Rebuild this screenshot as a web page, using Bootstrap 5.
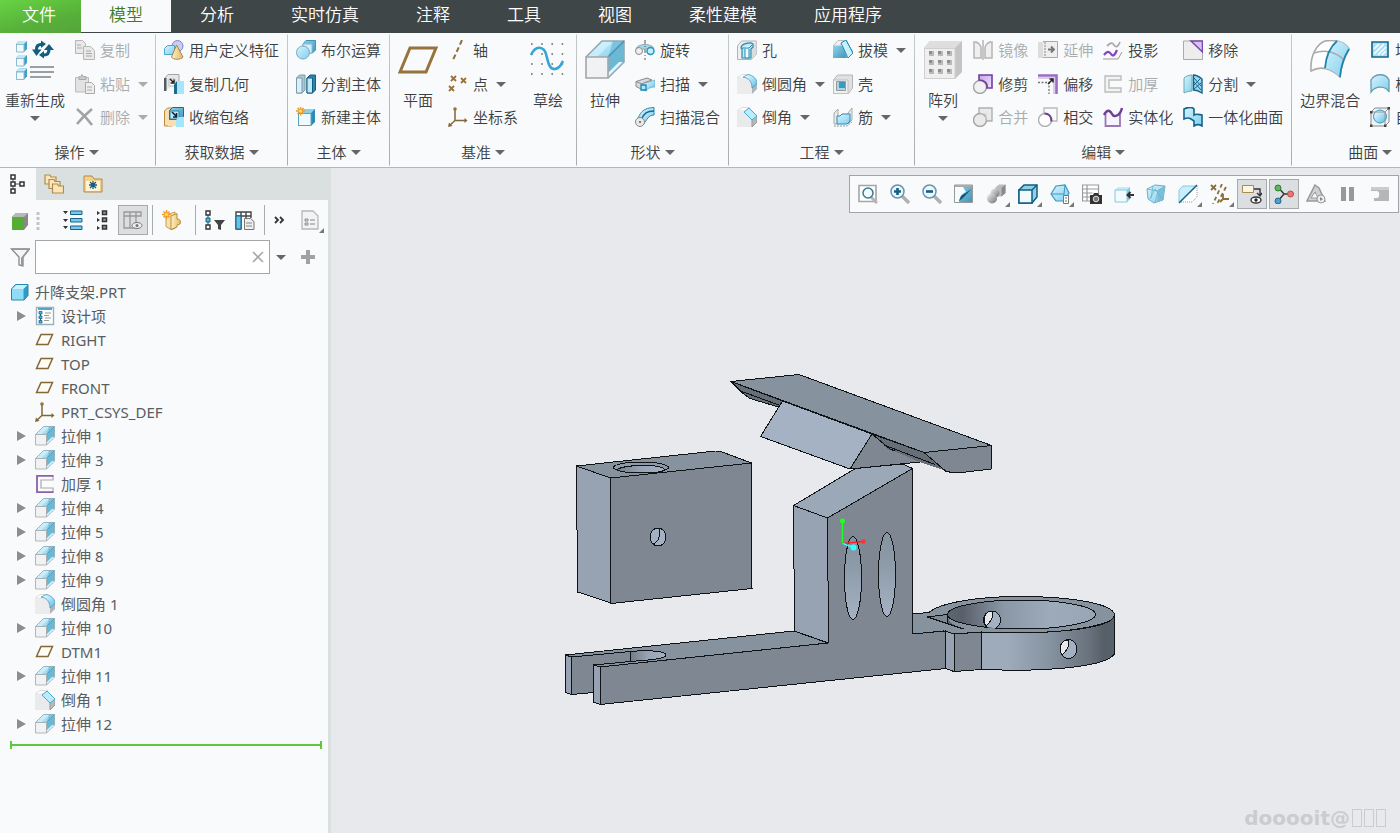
<!DOCTYPE html>
<html lang="zh-CN">
<head>
<meta charset="utf-8">
<meta name="viewport" content="width=device-width, initial-scale=1">
<title>升降支架.PRT</title>
<link rel="stylesheet" href="https://cdn.jsdelivr.net/npm/bootstrap@5.3.0/dist/css/bootstrap.min.css">
<style>
:root{--ink:#3b3f42;--muted:#a9abad;--pane:#f8fafc;--strip:#dae0e0;--rule:#b0b8b8}
body{font-family:"Noto Sans","Noto Sans CJK SC",sans-serif;font-size:15px;line-height:20px;font-weight:350;color:var(--ink);background:#e8e9ed}
svg{display:block;flex:none}
.ic{width:20px;height:20px}
.ic-lg{width:40px;height:40px}
.gap-10{gap:10px}
.gap-8{gap:8px}
.btn{--bs-btn-padding-x:0;--bs-btn-padding-y:0;--bs-btn-border-width:0;--bs-btn-border-radius:0;--bs-btn-font-size:15px;--bs-btn-line-height:20px;--bs-btn-font-weight:350;--bs-btn-color:var(--ink);--bs-btn-disabled-opacity:1;--bs-btn-disabled-color:var(--muted);white-space:nowrap}
.caret{width:0;height:0;border:5px solid transparent;border-top-color:#666;border-bottom:0;flex:none}
:disabled>.caret{border-top-color:var(--muted)}
.menu-tabs{background:#3e4647;height:33px;gap:1px}
.menu-tabs .nav-link{color:#fff;font-size:17px;line-height:24px;padding:3px 28px 5px;border-radius:0;height:33px}
.menu-tabs .file-tab{background:linear-gradient(165deg,#68d343,#57b13a 60%,#55a33a);padding-left:22px;padding-right:25px;margin-right:-1px}
.menu-tabs .active{background:var(--pane);color:#3f7c24;height:32px}
.ribbon{background:var(--pane);border-bottom:1px solid var(--rule);height:135px}
.tool-group{border-right:1px solid;border-image:linear-gradient(transparent 2px,#c4c9c9 3px,#a8adad 131px,transparent 132px) 1;padding:0 8px;flex:none}
.tool-group:first-child{padding:0 7px 0 5px}
.tool-rows{display:grid;grid-template-rows:34px 34px 32px;align-content:start;justify-items:start;height:102px}
.tool-rows .btn{display:flex;align-items:center;gap:5px}
.tool-rows .caret{margin-left:3px}
.group-name{height:32px;padding-top:2px}
.big-tool{display:flex;flex-direction:column;align-items:center;padding-top:7px;height:102px}
.big-tool span{margin-top:10px}
.big-tool .caret{margin-top:6px}
.side-pane{width:331px;border-right:3px solid var(--strip);background:var(--pane);flex:none}
.pane-tabs{background:var(--strip);height:32px}
.pane-tabs .nav-link{border-radius:0;padding:0;width:36px;height:32px;display:flex;align-items:center;justify-content:center}
.pane-tabs .nav-item+.nav-item{margin-right:3px}
.pane-tabs .active{background:var(--pane)}
.pane-tools{height:40px;padding-left:10px}
.pressed{background:#dcdfe1;outline:1px solid #a6aaad;outline-offset:-1px}
.sq{width:30px;height:30px;display:flex;align-items:center;justify-content:center}
.vr-line{width:1px;height:30px;background:#a9adad}
.filter-row{height:34px;padding-left:10px}
.filter-row input{height:34px;border:1px solid #a3a7a9;border-radius:0;padding:0 28px 0 6px;font-size:15px}
.filter-box{width:235px;margin-left:5px}
.clear-btn{position:absolute;right:6px;top:11px}
.filter-opt{padding:0 6px}
.tree{color:#5a5d5f;margin:6px 0 0;font-weight:400}
.tree li>div{height:24px;padding-left:17px}
.tree .root-row{padding-left:10px}
.tree .root-row .ic{margin-right:5px}
.twisty{width:10px;height:20px;margin-right:8px;display:flex;align-items:center}
.twisty::before{content:"";border:5px solid transparent;border-left:9px solid #8b8e90;border-right:0}
span.twisty::before{display:none}
.tree .ic{margin-right:6px}
.insert-line{height:2px;background:#5ec93c;margin:8px 6px 0 10px;position:relative}
.insert-line::before,.insert-line::after{content:"";position:absolute;top:-3px;width:2px;height:8px;background:#5ec93c}
.insert-line::before{left:0}.insert-line::after{right:0}
.view-tools{position:absolute;top:7px;right:1px;background:#f8fafc;border:1px solid #a3a3a8;padding:3px;gap:2px}
.more::after{content:"";position:absolute;right:1px;bottom:2px;border-left:5px solid transparent;border-bottom:5px solid #777}
.watermark{position:absolute;right:14px;bottom:4px;font:bold 20px/22px "DejaVu Sans",sans-serif;color:#cbcccd}
.watermark i{width:10px;height:18px;border:1px solid #cbcccd;margin-left:2px}
</style>
<script src="https://cdn.jsdelivr.net/npm/bootstrap@5.3.0/dist/js/bootstrap.bundle.min.js"></script>
</head>
<body class="vh-100 d-flex flex-column overflow-hidden">
<svg class="position-absolute" width="0" height="0" aria-hidden="true">
<defs>
<linearGradient id="gb" x1="0" y1="0" x2="1" y2="1"><stop offset="0" stop-color="#d8f3fd"/><stop offset="1" stop-color="#7fd0ef"/></linearGradient>
<linearGradient id="gd" x1="0" y1="0" x2="1" y2="1"><stop offset="0" stop-color="#8fd3ec"/><stop offset="1" stop-color="#3f94b8"/></linearGradient>
<linearGradient id="gw" x1="0" y1="0" x2="1" y2="1"><stop offset="0" stop-color="#fff"/><stop offset=".5" stop-color="#a9e2f8"/><stop offset="1" stop-color="#58b9df"/></linearGradient>
<linearGradient id="gt" x1="0" y1="0" x2="1" y2="0"><stop offset="0" stop-color="#fff1c9"/><stop offset="1" stop-color="#e5b964"/></linearGradient>
<linearGradient id="gg" x1="0" y1="0" x2="1" y2="1"><stop offset="0" stop-color="#f4f4f4"/><stop offset="1" stop-color="#6f6f6f"/></linearGradient>
<linearGradient id="gp" x1="0" y1="0" x2="1" y2="1"><stop offset="0" stop-color="#c9a3ec"/><stop offset="1" stop-color="#efe3fb"/></linearGradient>
</defs>
<symbol id="cubes" viewBox="0 0 40 40"><g id="c1"><path d="M1 4l3-3h8v8l-3 3H1z" fill="#3f9fc6"/><path d="M1 4l3-3h8L9 4z" fill="#bdeafa"/><path d="M1.500 4.500H9V12H1.500z" fill="#f3f8fa" stroke="#8cbccd"/></g><use href="#c1" y="14"/><use href="#c1" y="27.500"/><path d="M21.500 11C21 6 23 4.500 26 4.500" fill="none" stroke="#135e80" stroke-width="3.200"/><path d="M17 9.500h9.500L21.500 16z" fill="#135e80"/><path d="M29 15c3 0 5-1 5-6" fill="none" stroke="#135e80" stroke-width="3.200"/><path d="M29 10h10l-5-6z" fill="#135e80"/><path d="M26 .500l5 3.500-5 4zM29 18.500l-5-3.500 5-4z" fill="#135e80"/><path d="M15 27h24M15 32h24M15 37h21" stroke="#9b9fa1" stroke-width="2.200"/></symbol>
<symbol id="copy" viewBox="0 0 20 20"><g fill="#e9e9e9" stroke="#b5b5b5"><path d="M.5.500h7l3 3v10H.500z"/><path d="M8.500 6.500h7l4 4v9h-11z"/></g><path d="M2 5h4M2 8h5M11 11h5M11 13.500h6M11 16h6" stroke="#a8a8a8"/></symbol>
<symbol id="paste" viewBox="0 0 20 20"><path d="M.5 3.500h13V18H.500z" fill="#e2e2e2" stroke="#bbb"/><path d="M4 2.500h2l1-2 1 2h3v3H4z" fill="#ccc" stroke="#aaa"/><path d="M10.500 8.500h6l3 3v8h-9z" fill="#eee" stroke="#aaa"/><path d="M12 13h5M12 16h5" stroke="#aaa"/></symbol>
<symbol id="del" viewBox="0 0 20 20"><path d="M2 2c5 4 10 9 15 16M17 2C11 7 6 12 2 17" fill="none" stroke="#a3a3a3" stroke-width="2.600"/></symbol>
<symbol id="udf" viewBox="0 0 20 20"><circle cx="13.500" cy="6" r="5.500" fill="#c7cef2" stroke="#7d88c2"/><path d="M.5 8.500l3-3h7v9h-10z" fill="url(#gb)" stroke="#4ba9cd"/><path d="M12.500 5L19 17c-2 3-10 3-11.500 0z" fill="url(#gt)" stroke="#a58449"/></symbol>
<symbol id="geom" viewBox="0 0 20 20"><path d="M1 17V4l3-3.500h11V7" fill="#e6e8e9" stroke="#a3a6a8"/><path d="M0 4h2.500v13H0z" fill="#555b5e"/><path d="M5 5h6v7H5z" fill="#fff" stroke="#bbb"/><path d="M6 5l4 4M10 5.500V9H6.500" stroke="#222" fill="none" stroke-width="1.500"/><path d="M10 11l3-4v13h-3z" fill="#1e6a8a"/><path d="M13 7h7v13h-7z" fill="#a5e6fd"/></symbol>
<symbol id="shrink" viewBox="0 0 20 20"><path d="M.5 4l3-3h5v18h-8z" fill="#f8deb0" stroke="#b98b3d"/><path d="M5.500 3.500l3-3h11v9l-3 3h-11z" fill="url(#gd)" stroke="#1e6a8a"/><path d="M6 4h9v8H6z" fill="#bdeafa" stroke="#2b7ea0"/><path d="M8 5l4 4M12.500 6v4H9" fill="none" stroke="#123" stroke-width="1.600"/><path d="M4 13h8v6H4z" fill="#f8deb0"/><path d="M12 13l3-3h5v10h-8z" fill="#a5e6fd"/></symbol>
<symbol id="bool" viewBox="0 0 20 20"><path d="M7 4l3-3.500h9.500V10l-3 3H7z" fill="url(#gd)" stroke="#3f94b8"/><path d="M7 4h9v9H7z" fill="#d3eef8" stroke="#84bcd1"/><circle cx="7" cy="12.500" r="6.500" fill="url(#gb)" stroke="#79a9bb"/></symbol>
<symbol id="split" viewBox="0 0 20 20"><path d="M.5 4l3-3h5.500v15l-3 3H.500z" fill="#a9c7d3" stroke="#7f9aa5"/><path d="M.5 4H6v15H.500z" fill="#d6f1fb" stroke="#7f9aa5"/><path d="M11 4l3-3h5.500v15l-3 3H11z" fill="#2a86ac" stroke="#165d7e"/><path d="M11 4h5.500v15H11z" fill="#bdeafa" stroke="#165d7e"/></symbol>
<symbol id="newbody" viewBox="0 0 20 20"><path d="M2 6l4-4h13v13l-4 4H2z" fill="#2d8bb3"/><path d="M2 6l4-4h13l-4 4z" fill="#8bd0e9"/><path d="M2.500 6.500H15v12H2.500z" fill="#effafe" stroke="#5aa4c0"/><path d="M4.500-.5v9M0 4h9M1.500 1l6 6M7.500 1l-6 6" stroke="#f09a2b" stroke-width="1.500"/><circle cx="4.500" cy="4" r="1.500" fill="#ffe45c"/></symbol>
<symbol id="plane" viewBox="0 0 40 40"><path d="M12 8h26l-10 24H2z" fill="none" stroke="#97723a" stroke-width="3"/></symbol>
<symbol id="plane-s" viewBox="0 0 20 20"><path d="M6 4.500h11.500L13 14.500H1.500z" fill="#fffdf6" stroke="#856636" stroke-width="1.500"/></symbol>
<symbol id="axis" viewBox="0 0 20 20"><path d="M14 0L5 20" stroke="#8c6d37" stroke-width="2" stroke-dasharray="5 3"/></symbol>
<symbol id="pts" viewBox="0 0 20 20"><path id="px" d="M3 2l5 5M8 2L3 7" stroke="#97723a" stroke-width="1.800"/><use href="#px" x="10" y="2"/><use href="#px" x="-2" y="10"/></symbol>
<symbol id="csys" viewBox="0 0 20 20"><path d="M7 2v11.500h11M7 13.500L1.500 18.500" fill="none" stroke="#856636" stroke-width="1.500"/><circle cx="7" cy="2" r="1.800" fill="#97723a"/><path d="M16.500 11l3 2.500-3 2.500zM0 20l1-4.500 3.500 3.500z" fill="#856636"/></symbol>
<symbol id="sketch" viewBox="0 0 40 40"><g stroke="#666" stroke-width="1.600" stroke-dasharray="1.600 8.600"><path d="M3 4h34M3 14h34M3 24h34M3 34h34"/></g><path d="M3 15C8 4 16 7 18 14s3 16 9 15 6-5 8-8" fill="none" stroke="#35a6d8" stroke-width="2.600"/></symbol>
<symbol id="ext" viewBox="0 0 40 40"><path d="M1 17L17 1h22v21L23 38z" fill="#6bb8d5"/><path d="M1 17L17 1h22L23 17z" fill="url(#gb)"/><path d="M17 1h11L12 17H1z" fill="#d4f2fc" opacity=".7"/><path d="M28 1h11L23 17z" fill="#7cc4de"/><path d="M23 38V33l11-11h5z" fill="#dff7fe"/><path d="M1 17L17 1h22v21L23 38" fill="none" stroke="#8fa9b3" stroke-width="1.600"/><path d="M39 1L23 17" stroke="#4592b3" stroke-width="1.500"/><path d="M1 17h22v21H1z" fill="#f1f2f4" stroke="#a5a5a5" stroke-width="1.600"/></symbol>
<symbol id="rev" viewBox="0 0 20 20"><path d="M1 9c1-6 17-6 18 0l-6 1c-1-2-4-2-6 0z" fill="#9fd9ee" stroke="#9aa"/><circle cx="4" cy="11" r="3.500" fill="#eee" stroke="#888"/><circle cx="15.500" cy="11" r="3.500" fill="#c3effd" stroke="#2794c0" stroke-width="1.500"/><path d="M10 0v20" stroke="#555" stroke-dasharray="4 2 1 2"/></symbol>
<symbol id="sweep" viewBox="0 0 20 20"><path d="M7 9c4 0 8-1 13-3v7c-4 0-7 1-9 4l-4-1z" fill="url(#gw)" stroke="#6cb3cc" stroke-width=".8"/><path d="M1 7.500L12 4l5 2-7 2.500-3 1.500v5.500l-6-3z" fill="#d9dadb" stroke="#888"/><path d="M1 7.500l6 2.500" stroke="#888"/><path d="M6 11h5v5H6z" fill="#aee6fa" stroke="#2384ac" stroke-width="1.300"/></symbol>
<symbol id="blend" viewBox="0 0 20 20"><path d="M1 14C5 9 5 1 19 .500V8c-6 0-7 5-11 10z" fill="url(#gb)" stroke="#2a87ad"/><path d="M6 13c3-7 6-9 13-9" fill="none" stroke="#1e6a8a" stroke-width="1.500"/><circle cx="5" cy="15" r="4.500" fill="#e9e9e9" stroke="#888"/><circle cx="5" cy="15" r="1" fill="#555"/></symbol>
<symbol id="hole" viewBox="0 0 20 20"><path d="M.5 6l4-5h15v13l-5 5.500H.500z" fill="#efefef" stroke="#b3b3b3"/><path d="M15 6l4.500-5v13L15 19z" fill="#dcdcdc"/><path d="M4 8c0-5 10-6 12-4v3l-2 2v9H5V9z" fill="#bdeafa" stroke="#2888b1" stroke-width="1.200"/><path d="M4 8h8l3-3M8 9v9h4V9" stroke="#2888b1" fill="#f4fcff"/></symbol>
<symbol id="round" viewBox="0 0 20 20"><path d="M0 4L5 .500h8L8 4z" fill="#fff" stroke="#ddd"/><path d="M0 4h6c6 0 9 4 9 9v7H0z" fill="#ececec"/><path d="M15 12l5-4v7l-5 5z" fill="#aeb6ba"/><path d="M6 3l5-2.500c5 1 9 4 9 9L15 14C15 8 12 4 6 3z" fill="url(#gw)" stroke="#3a9dc6" stroke-width=".8"/></symbol>
<symbol id="chamfer" viewBox="0 0 20 20"><path d="M0 4L5 .500h8L8 4z" fill="#fff" stroke="#ddd"/><path d="M0 4h7l8 8v8H0z" fill="#e9eaeb"/><path d="M15 12l5-4v7l-5 5z" fill="#b6b9bb" stroke="#999"/><path d="M7 5l5-4 8 8-5 4z" fill="#b9edfd" stroke="#4aa9cc"/></symbol>
<symbol id="draft" viewBox="0 0 20 20"><path d="M0 6l5-5.500h6L7 6z" fill="#f1f1f1" stroke="#bbb"/><path d="M0 6h10l4 12H0z" fill="url(#gd)"/><path d="M8 3l5-3 7 13-5 5z" fill="#c8f0fd" stroke="#2888b1"/><path d="M13 0l7 13-5 5" fill="none" stroke="#2f93bb"/></symbol>
<symbol id="shell" viewBox="0 0 20 20"><path d="M.5 6l4-5h15v13l-4 5.500H.500z" fill="#e0e0e0" stroke="#b5b5b5"/><path d="M.5 6h14.500v13.500H.500z" fill="#f0f0f0" stroke="#c0c0c0"/><path d="M3.500 7.500h9v9h-9z" fill="#9adcf2" stroke="#999"/><path d="M6 8h6v6H6z" fill="#3f97bb"/></symbol>
<symbol id="rib" viewBox="0 0 20 20"><path d="M1 6l4-4v15H1zM15 6l4-5v12l-4 4z" fill="#e9e9e9" stroke="#aaa"/><path d="M4 9h3l2-2h8v7l-3 3H4z" fill="url(#gb)" stroke="#2888b1"/><path d="M1 19h13l5-4" fill="none" stroke="#999" stroke-dasharray="2 1"/></symbol>
<symbol id="pattern" viewBox="0 0 40 40"><path d="M1 8l6-7h32v31l-7 7H1z" fill="#c4c4c4"/><path d="M1 8l6-7h32l-7 7z" fill="#dedede"/><path d="M1.500 8.500H32v30H1.500z" fill="#efefef" stroke="#cfcfcf"/><g stroke="#b9b9b9" stroke-width="5" stroke-dasharray="5 4"><path d="M6 13.500h23M6 22.500h23M6 31.500h23"/></g><g stroke="#8d8d8d" stroke-width="3" stroke-dasharray="3 6"><path d="M6 12.500h22M6 21.500h22M6 30.500h22"/></g></symbol>
<symbol id="mirror" viewBox="0 0 20 20"><g fill="#efefef" stroke="#b5b5b5" stroke-width="1.500"><path d="M1 2h2c3 1 5 4 5 6v10H1zM19 2h-2c-3 1-5 4-5 6v10h7z"/><path d="M10 0v20"/></g></symbol>
<symbol id="extend" viewBox="0 0 20 20"><path d="M0 2h7v16H0z" fill="#ddd"/><path d="M5 1.500h14.500v16H5" fill="#eee" stroke="#aaa"/><path d="M7 2v15" stroke="#888" stroke-dasharray="2 1"/><path d="M10 9.500h6M13 6.500l3 3-3 3" stroke="#777" stroke-width="1.800" fill="none"/></symbol>
<symbol id="trim" viewBox="0 0 20 20"><circle cx="7" cy="13" r="6.500" fill="#f1f1f1" stroke="#a5a5a5" stroke-width="1.400"/><path d="M6 1h13v13h-5c1-5-3-8-8-8z" fill="url(#gp)" stroke="#6f3f9b" stroke-width="1.600"/></symbol>
<symbol id="merge" viewBox="0 0 20 20"><path d="M6 1h13v13H6z" fill="#eaeaea" stroke="#b0b0b0" stroke-width="1.400"/><circle cx="7" cy="13" r="6.500" fill="#eaeaea" stroke="#a5a5a5" stroke-width="1.400"/><path d="M7 7h6v6" fill="none" stroke="#ccc"/></symbol>
<symbol id="offset" viewBox="0 0 20 20"><path d="M0 1.500h18.500V20" fill="none" stroke="#9a6cc4" stroke-width="2.600"/><path d="M0 4h16v16" fill="none" stroke="#dccbed" stroke-width="2"/><path d="M0 8.500h11V20" fill="none" stroke="#777" stroke-width="1.300" stroke-dasharray="2 1.500"/><path d="M10 10l5-5M11.500 5H15v3.500" stroke="#222" stroke-width="1.500" fill="none"/></symbol>
<symbol id="isect" viewBox="0 0 20 20"><path d="M6 1h13v13H6z" fill="none" stroke="#bbb" stroke-width="1.400"/><circle cx="7" cy="13" r="6.500" fill="#fff" stroke="#b0b0b0" stroke-width="1.400"/><path d="M6.500 6.500c4 0 7.500 3 7 8" fill="none" stroke="#6b4390" stroke-width="2"/></symbol>
<symbol id="project" viewBox="0 0 20 20"><path d="M4 6c3-3 5-4 7-1s4 2 6-3" fill="none" stroke="#aaa" stroke-width="1.800"/><path d="M0 19h15l4-7" fill="none" stroke="#999"/><path d="M1 15c3-4 5-4 7-1s4 1 6-4" fill="none" stroke="#8742bd" stroke-width="2.200"/></symbol>
<symbol id="thick" viewBox="0 0 20 20"><path d="M18 2H2v16h16v-4H6V6h12z" fill="#f3f3f3" stroke="#bdbdbd" stroke-width="1.400"/></symbol>
<symbol id="thick-p" viewBox="0 0 20 20"><path d="M18 2v4H6v8h12v4" fill="#fbfbfb" stroke="#aaa" stroke-width="1.200"/><path d="M18.500 1.800H2v16.400h16.500" fill="none" stroke="#8a5fae" stroke-width="1.800"/></symbol>
<symbol id="solid" viewBox="0 0 20 20"><path d="M2.500 7v12h14.500V6" fill="#f8f4fc" stroke="#9a77b7" stroke-width="1.800"/><path d="M1 8c3-6 6-5 8-1s8 2 10-6" fill="none" stroke="#6e3f99" stroke-width="2.400"/></symbol>
<symbol id="remove" viewBox="0 0 20 20"><path d="M.5 1h19v18.500H.500z" fill="#ededed" stroke="#aaa"/><path d="M8 1h11.500v11z" fill="#d9bff2" stroke="#7a4aa6" stroke-width="1.500"/></symbol>
<symbol id="divide" viewBox="0 0 20 20"><path d="M1 4c2-2 5-3 8-3v16c-3 0-6 1-8 2z" fill="url(#gb)" stroke="#6aa"/><path d="M10.500 1c3 0 6 2 8.500 4v14c-3-2-6-3-8.500-3z" fill="#9bd8f0" stroke="#17648a" stroke-width="1.400"/><path d="M11 4l7 8M11 8l7 8M17 5l-6 6M18 9l-7 6" stroke="#17648a"/></symbol>
<symbol id="unify" viewBox="0 0 20 20"><path d="M1 2c4-2 8-2 10 0v6c3-2 6 0 8 0v11c-3-2-5-2-8 0v-5l-3-2c-3-2-5-1-7 0z" fill="url(#gb)" stroke="#17648a" stroke-width="1.600"/></symbol>
<symbol id="bound" viewBox="0 0 40 40"><path d="M1 31C0 15 7 4 15 1c9-2 20 1 24 8-4 7-8 15-9 28-8-8-19-12-29-6z" fill="#fff" stroke="#aaa" stroke-width="1.600"/><path d="M27 1c6 1 10 4 12 8-5 8-8 16-9 28-5-5-10-8-15-9 1-11 4-21 12-27z" fill="url(#gb)"/><path d="M4 13c11-4 22-1 30 7" fill="none" stroke="#aaa" stroke-width="1.500"/><path d="M27 1c-7 6-11 15-12 27M39 9c-5 8-8 16-9 28" fill="none" stroke="#1e83ad" stroke-width="1.800"/></symbol>
<symbol id="fill" viewBox="0 0 20 20"><path d="M2 2h16v15H2z" fill="#a9e0f5" stroke="#17648a" stroke-width="1.600"/><path d="M4 9l5-5M4 14L14 4M8 15l8-8M12 15l4-4" stroke="#fff" stroke-width="1.500"/></symbol>
<symbol id="style" viewBox="0 0 20 20"><path d="M1 6c4-7 15-7 18 0v12c-3-6-13-7-18 0z" fill="url(#gb)" stroke="#689bb0" stroke-width="1.300"/></symbol>
<symbol id="free" viewBox="0 0 20 20"><path d="M1 5l4-4h14v14l-4 4H1z" fill="#f1f3f4" stroke="#888"/><circle cx="10" cy="9.500" r="6.500" fill="url(#gw)" stroke="#3c98bd"/><path d="M1 5h14v14M15 5l4-4" fill="none" stroke="#999"/><path d="M0 4h2.500v2.500H0zM0 17.500h2.500V20H0zM14 17.500h2.500V20H14zM17.500 0H20v2.500h-2.500z" fill="#444"/></symbol>
<symbol id="treeI" viewBox="0 0 20 20"><path d="M5 2v16M5 10h9" stroke="#555"/><path d="M3 1h4v4H3zM3 8h4v4H3zM3 15h4v4H3zM12 8h4v4h-4z" fill="#fff" stroke="#333" stroke-width="1.500"/></symbol>
<symbol id="folders" viewBox="0 0 20 20"><g id="fo"><path d="M1 3V1h5l1 2h5v7H1z" fill="#fbe6b9" stroke="#b18b4d" stroke-width="1.200"/></g><use href="#fo" x="4" y="4.500"/><use href="#fo" x="7.500" y="9"/></symbol>
<symbol id="fav" viewBox="0 0 20 20"><path d="M1 18V2h8l2 3h8v13z" fill="#f4d18b" stroke="#b18b4d"/><path d="M3 7h14v10H3z" fill="#fff3d2"/><path d="M10 7v8M6 11h8M7 8l6 6M13 8l-6 6" stroke="#135e80" stroke-width="1.300"/></symbol>
<symbol id="gcube" viewBox="0 0 20 20"><path d="M2 7l4-4h12v12l-4 5H2z" fill="#888"/><path d="M2 7l4-4h12l-4 4z" fill="#b8b8b8"/><path d="M2 7.500h12V20H2z" fill="#55ad36"/></symbol>
<symbol id="bcube" viewBox="0 0 20 20"><path d="M1.500 7l4-4.500H18v11l-4 4.500H1.500z" fill="#2f9bc6" stroke="#2685ab"/><path d="M2 7l4-4h11.500l-4 4z" fill="#c8f0fd"/><path d="M2 7h11.500v10.500H2z" fill="#8fdcf8"/></symbol>
<symbol id="exp" viewBox="0 0 20 20"><path d="M0 1h5L2.500 4zM0 9h5l-2.500 3zM0 16h5l-2.500 3z" fill="#333"/><path d="M7.500 1h11.500v3.500H7.500zM7.500 8.500h11.500v3.500H7.500zM7.500 16h11.500v3.500H7.500z" fill="#79c9e8" stroke="#17648a"/></symbol>
<symbol id="col" viewBox="0 0 20 20"><path d="M4 1l3 2-3 2zM4 8l3 2-3 2zM4 16l3 2-3 2z" fill="#333"/><path d="M9.500 1h4v3.500h-4zM9.500 8h4v3.500h-4zM9.500 15.500h4V19h-4z" fill="#999" stroke="#333" stroke-width="1.500"/></symbol>
<symbol id="cols" viewBox="0 0 20 20"><path d="M1 2h17v4H1zM1 6v12h12V6M7 2v16M13 2v16" fill="#ddd" stroke="#999" stroke-width="1.300"/><ellipse cx="14" cy="15.500" rx="5" ry="3" fill="#eee" stroke="#777"/><circle cx="14" cy="15.500" r="1.500" fill="#777"/></symbol>
<symbol id="puzzle" viewBox="0 0 20 20"><path d="M4 5l9-3v16.500l-4 1-5-3z" fill="#fbe0a9" stroke="#c79c54"/><path d="M9 6l6-2.500V9c3 0 4 2 3 5l-3 1v2l-6 2.500z" fill="url(#gt)" stroke="#b98b3d"/><path d="M4.500 0v9M0 4.500h9M1.500 1.500l6 6M7.500 1.500l-6 6" stroke="#f09a2b" stroke-width="1.500"/><circle cx="4.500" cy="4.500" r="1.500" fill="#ffe45c"/></symbol>
<symbol id="tfil" viewBox="0 0 20 20"><path d="M3 2v17" stroke="#444"/><path d="M1 1h4v4H1zM1 15h4v4H1z" fill="#fff" stroke="#333" stroke-width="1.400"/><path d="M1 8h4v4H1z" fill="#4db8e0" stroke="#17648a"/><path d="M9 10h11l-4 5v5l-3-1v-4z" fill="#444"/></symbol>
<symbol id="tcol" viewBox="0 0 20 20"><path d="M1 2h15v4H1zM1 6v13h5V6M6 2v17M11 2v8M16 2v6" fill="#fff" stroke="#444" stroke-width="1.400"/><path d="M1 6h5v13H1z" fill="#67c2e4" stroke="#17648a"/><path d="M9.500 8.500h6l3.500 3v8H9.500z" fill="#eee" stroke="#777"/><path d="M11 13h6M11 16h6" stroke="#888"/></symbol>
<symbol id="docl" viewBox="0 0 20 20"><path d="M2 1h11l5 5v13H2z" fill="#f2f3f4" stroke="#b5b9bb" stroke-width="1.300"/><path d="M5 9h3v2H5zM5 13h3v2H5zM10 10h5M10 14h5" fill="none" stroke="#888"/></symbol>
<symbol id="funnel" viewBox="0 0 20 20"><path d="M1.500 2h18L13 10v9l-4-1v-8z" fill="#f5f5f5" stroke="#888" stroke-width="1.300"/><path d="M1 1.500h19v1.500H1zM11 11l7-9h2l-7 9v8l-2-1z" fill="#999"/></symbol>
<symbol id="design" viewBox="0 0 20 20"><path d="M1.500 1.500h17v17h-17z" fill="#fff" stroke="#9db0b9" stroke-width="1.400"/><path d="M3 3h14" stroke="#2b93c0" stroke-width="1.600"/><path d="M5.500 6v11" stroke="#17648a"/><path d="M4 5.500h3V8H4zM4 10h3v2.500H4zM4 14.500h3V17H4z" fill="#4db8e0" stroke="#17648a" stroke-width=".8"/><path d="M10 7h6M9 9.500h5M10 12h6M9 14.500h5" stroke="#999"/></symbol>
<symbol id="zfit" viewBox="0 0 20 20"><path d="M1 1.500h17v16H1z" fill="#fff" stroke="#a5a5a5" stroke-width="1.600"/><path d="M13 13l6 6" stroke="#b5b5b5" stroke-width="3"/><circle cx="10" cy="9" r="5" fill="#effaff" stroke="#3d7792" stroke-width="1.500"/></symbol>
<symbol id="zin" viewBox="0 0 20 20"><path d="M12 12l7 7" stroke="#b0b0b0" stroke-width="3.500"/><circle cx="7.500" cy="7.500" r="6.500" fill="#eaf8fe" stroke="#6a96aa" stroke-width="1.500"/><path d="M7.500 4v7M4 7.500h7" stroke="#145f83" stroke-width="2.600"/></symbol>
<symbol id="zout" viewBox="0 0 20 20"><path d="M12 12l7 7" stroke="#b0b0b0" stroke-width="3.500"/><circle cx="7.500" cy="7.500" r="6.500" fill="#eaf8fe" stroke="#6a96aa" stroke-width="1.500"/><path d="M4 7.500h7" stroke="#145f83" stroke-width="2.600"/></symbol>
<symbol id="repaint" viewBox="0 0 20 20"><path d="M.5 1h18v17.500H.500z" fill="url(#gd)" stroke="#999"/><path d="M1 1h17v2H1z" fill="#aaa"/><path d="M1 3h8l3 5c-5 2-6 5-7 10H1z" fill="#f4fbfe"/><path d="M17.500 5L9 14l-4 3 2-5z" fill="#17546f"/></symbol>
<symbol id="render" viewBox="0 0 20 20"><path d="M9 4l4-3.500h6.500V9l-4 3.500H9z" fill="#bbb"/><path d="M15.500 4l4-3.500V9l-4 3.500z" fill="#8a8a8a"/><circle cx="9" cy="9" r="4.500" fill="url(#gg)"/><circle cx="6" cy="14.500" r="5" fill="url(#gg)"/></symbol>
<symbol id="wcube" viewBox="0 0 20 20"><path d="M1 6l5-5h13v12l-5 6H1z" fill="#8cd0ea" stroke="#135e80" stroke-width="1.500"/><path d="M1 6h13v13H1zM14 6l5-5" fill="#f0fbff" stroke="#135e80" stroke-width="1.500"/></symbol>
<symbol id="orient" viewBox="0 0 20 20"><path d="M1 10l5-8 9-1 4 8-4 8H6z" fill="url(#gb)" stroke="#3c98bd" stroke-width="1.200"/><path d="M1 10h13l1-9M14 10v9" fill="none" stroke="#3c98bd"/><path d="M13.500 11.500h5v8h-5z" fill="#fff" stroke="#777"/><path d="M15 14h2M15 17h2" stroke="#777"/></symbol>
<symbol id="cam" viewBox="0 0 20 20"><path d="M.5 1h16v16H.500zM.5 5h16M.5 9h10M.5 13h8M5 1v16" fill="#fff" stroke="#999" stroke-width="1.200"/><path d="M8 11h3l1-2h4l1 2h3v9H8z" fill="#333"/><circle cx="14" cy="15" r="2.800" fill="#777" stroke="#ddd"/></symbol>
<symbol id="sec" viewBox="0 0 20 20"><path d="M1 6l4-3h11v12l-3 3H1z" fill="#7dcdea"/><path d="M1 6l4-3h11l-3 3z" fill="#c3ecfa"/><path d="M1 6h12v12H1z" fill="#f1fbff" stroke="#8fc7da"/><path d="M20 11h-6M16.500 8l-3 3 3 3" fill="none" stroke="#333" stroke-width="2"/></symbol>
<symbol id="persp" viewBox="0 0 20 20"><path d="M1 5l8-4 10 1-2 14-9 3-6-4z" fill="url(#gb)" stroke="#6cb0c9"/><path d="M12 6l7-4-2 14-6 2z" fill="#7dbfd8"/><path d="M1 5l11 2 7-5M12 7l-3 12M4 15L9 5l8 11M7 2l-2 12" fill="none" stroke="#6cb0c9" stroke-width=".8"/></symbol>
<symbol id="halfc" viewBox="0 0 20 20"><path d="M1 18V6l4-4h14z" fill="#c9effc" stroke="#8fc7da"/><path d="M19 2v11l-5 5H2z" fill="#fff" stroke="#999" stroke-dasharray="1 1"/><path d="M19 1L1 19" stroke="#17648a" stroke-width="1.500"/></symbol>
<symbol id="datum" viewBox="0 0 20 20"><g fill="none" stroke="#8c6d37" stroke-width="1.800"><path d="M1 1l5 5M6 1L1 6"/><path d="M12 0L3 20M16 3L7 20" stroke-dasharray="4 3"/><path d="M13 10v5h6M13 15l-3 3"/></g></symbol>
<symbol id="annot" viewBox="0 0 20 20"><path d="M.5 1.500h11v7H.500z" fill="#fff5dc" stroke="#a78a55"/><path d="M12 5h6v6M15 9l3 3 2-3" fill="none" stroke="#333" stroke-width="1.400"/><ellipse cx="14" cy="16" rx="5" ry="3" fill="#fff" stroke="#333" stroke-width="1.400"/><circle cx="14" cy="16" r="1.700" fill="#222"/></symbol>
<symbol id="spin" viewBox="0 0 20 20"><path d="M4 3l6 7h7M10 10l-6 7" fill="none" stroke="#333" stroke-width="1.400"/><circle cx="4" cy="4" r="3" fill="#5cb85c" stroke="#337a38"/><circle cx="16.500" cy="10" r="3" fill="#ed7777" stroke="#b94747"/><circle cx="4" cy="17" r="3" fill="#4b9fd0" stroke="#236a93"/></symbol>
<symbol id="sim" viewBox="0 0 20 20"><path d="M9 1l4 3 6 13H1z" fill="#d0d0d0" stroke="#999" stroke-width="1.500"/><path d="M9 8l3 6H5z" fill="#f8fafc" stroke="#999"/><circle cx="15" cy="15" r="4" fill="#eee" stroke="#999"/><path d="M14 13l3 2-3 2z" fill="#888"/></symbol>
<symbol id="pause" viewBox="0 0 20 20"><path d="M3 3h5v14H3zM11 3h5v14h-5z" fill="#999"/></symbol>
<symbol id="resume" viewBox="0 0 20 20"><path d="M1 3h18v14H4v-3h3c3 0 3-7 0-7H1z" fill="#b6b6b6"/><path d="M1 3h18v3H1z" fill="#ccc"/></symbol>
</svg>

<header>
<ul class="nav menu-tabs flex-nowrap">
<li><a class="nav-link file-tab" href="#">文件</a></li><li><a class="nav-link active" href="#">模型</a></li><li><a class="nav-link" href="#">分析</a></li><li><a class="nav-link" href="#">实时仿真</a></li><li><a class="nav-link" href="#">注释</a></li><li><a class="nav-link" href="#">工具</a></li><li><a class="nav-link" href="#">视图</a></li><li><a class="nav-link" href="#">柔性建模</a></li><li><a class="nav-link" href="#">应用程序</a></li>
</ul>
<div class="ribbon d-flex overflow-hidden">
<section class="tool-group">
<div class="d-flex gap-10">
<button class="btn big-tool"><svg class="ic-lg"><use href="#cubes"/></svg><span>重新生成</span><b class="caret"></b></button>
<div class="tool-rows"><button class="btn" disabled><svg class="ic"><use href="#copy"/></svg>复制</button><button class="btn" disabled><svg class="ic"><use href="#paste"/></svg>粘贴<b class="caret"></b></button><button class="btn" disabled><svg class="ic"><use href="#del"/></svg>删除<b class="caret"></b></button></div>
</div>
<div class="group-name d-flex justify-content-center"><button class="btn d-flex align-items-center gap-1">操作<b class="caret"></b></button></div>
</section>
<section class="tool-group">
<div class="tool-rows"><button class="btn"><svg class="ic"><use href="#udf"/></svg>用户定义特征</button><button class="btn"><svg class="ic"><use href="#geom"/></svg>复制几何</button><button class="btn"><svg class="ic"><use href="#shrink"/></svg>收缩包络</button></div>
<div class="group-name d-flex justify-content-center"><button class="btn d-flex align-items-center gap-1">获取数据<b class="caret"></b></button></div>
</section>
<section class="tool-group">
<div class="tool-rows"><button class="btn"><svg class="ic"><use href="#bool"/></svg>布尔运算</button><button class="btn"><svg class="ic"><use href="#split"/></svg>分割主体</button><button class="btn"><svg class="ic"><use href="#newbody"/></svg>新建主体</button></div>
<div class="group-name d-flex justify-content-center"><button class="btn d-flex align-items-center gap-1">主体<b class="caret"></b></button></div>
</section>
<section class="tool-group">
<div class="d-flex gap-10">
<button class="btn big-tool"><svg class="ic-lg"><use href="#plane"/></svg><span>平面</span></button>
<div class="tool-rows"><button class="btn"><svg class="ic"><use href="#axis"/></svg>轴</button><button class="btn"><svg class="ic"><use href="#pts"/></svg>点<b class="caret"></b></button><button class="btn"><svg class="ic"><use href="#csys"/></svg>坐标系</button></div>
<button class="btn big-tool"><svg class="ic-lg"><use href="#sketch"/></svg><span>草绘</span></button>
</div>
<div class="group-name d-flex justify-content-center"><button class="btn d-flex align-items-center gap-1">基准<b class="caret"></b></button></div>
</section>
<section class="tool-group">
<div class="d-flex gap-10">
<button class="btn big-tool"><svg class="ic-lg"><use href="#ext"/></svg><span>拉伸</span></button>
<div class="tool-rows"><button class="btn"><svg class="ic"><use href="#rev"/></svg>旋转</button><button class="btn"><svg class="ic"><use href="#sweep"/></svg>扫描<b class="caret"></b></button><button class="btn"><svg class="ic"><use href="#blend"/></svg>扫描混合</button></div>
</div>
<div class="group-name d-flex justify-content-center"><button class="btn d-flex align-items-center gap-1">形状<b class="caret"></b></button></div>
</section>
<section class="tool-group">
<div class="d-flex gap-8">
<div class="tool-rows"><button class="btn"><svg class="ic"><use href="#hole"/></svg>孔</button><button class="btn"><svg class="ic"><use href="#round"/></svg>倒圆角<b class="caret"></b></button><button class="btn"><svg class="ic"><use href="#chamfer"/></svg>倒角<b class="caret"></b></button></div>
<div class="tool-rows"><button class="btn"><svg class="ic"><use href="#draft"/></svg>拔模<b class="caret"></b></button><button class="btn"><svg class="ic"><use href="#shell"/></svg>壳</button><button class="btn"><svg class="ic"><use href="#rib"/></svg>筋<b class="caret"></b></button></div>
</div>
<div class="group-name d-flex justify-content-center"><button class="btn d-flex align-items-center gap-1">工程<b class="caret"></b></button></div>
</section>
<section class="tool-group">
<div class="d-flex gap-10">
<button class="btn big-tool"><svg class="ic-lg"><use href="#pattern"/></svg><span>阵列</span><b class="caret"></b></button>
<div class="tool-rows"><button class="btn" disabled><svg class="ic"><use href="#mirror"/></svg>镜像</button><button class="btn"><svg class="ic"><use href="#trim"/></svg>修剪</button><button class="btn" disabled><svg class="ic"><use href="#merge"/></svg>合并</button></div>
<div class="tool-rows"><button class="btn" disabled><svg class="ic"><use href="#extend"/></svg>延伸</button><button class="btn"><svg class="ic"><use href="#offset"/></svg>偏移</button><button class="btn"><svg class="ic"><use href="#isect"/></svg>相交</button></div>
<div class="tool-rows"><button class="btn"><svg class="ic"><use href="#project"/></svg>投影</button><button class="btn" disabled><svg class="ic"><use href="#thick"/></svg>加厚</button><button class="btn"><svg class="ic"><use href="#solid"/></svg>实体化</button></div>
<div class="tool-rows"><button class="btn"><svg class="ic"><use href="#remove"/></svg>移除</button><button class="btn"><svg class="ic"><use href="#divide"/></svg>分割<b class="caret"></b></button><button class="btn"><svg class="ic"><use href="#unify"/></svg>一体化曲面</button></div>
</div>
<div class="group-name d-flex justify-content-center"><button class="btn d-flex align-items-center gap-1">编辑<b class="caret"></b></button></div>
</section>
<section class="tool-group">
<div class="d-flex gap-10">
<button class="btn big-tool"><svg class="ic-lg"><use href="#bound"/></svg><span>边界混合</span></button>
<div class="tool-rows"><button class="btn"><svg class="ic"><use href="#fill"/></svg>填充</button><button class="btn"><svg class="ic"><use href="#style"/></svg>样式</button><button class="btn"><svg class="ic"><use href="#free"/></svg>自由式</button></div>
</div>
<div class="group-name d-flex justify-content-center"><button class="btn d-flex align-items-center gap-1">曲面<b class="caret"></b></button></div>
</section>
</div>
</header>

<div class="d-flex flex-grow-1 overflow-hidden">
<aside class="side-pane">
<ul class="nav pane-tabs">
<li class="nav-item"><a class="nav-link active" href="#" aria-label="模型树"><svg class="ic"><use href="#treeI"/></svg></a></li><li class="nav-item"><a class="nav-link" href="#" aria-label="文件夹浏览器"><svg class="ic"><use href="#folders"/></svg></a></li><li class="nav-item"><a class="nav-link" href="#" aria-label="收藏夹"><svg class="ic"><use href="#fav"/></svg></a></li>
</ul>
<div class="pane-tools d-flex align-items-center">
<button class="btn" aria-label="模型"><svg class="ic"><use href="#gcube"/></svg></button>
<svg class="me-3 ms-1" width="8" height="20"><path d="M4 2v18" stroke="#c1c4c6" stroke-width="3" stroke-dasharray="3 2"/></svg>
<button class="btn sq" aria-label="全部展开"><svg class="ic"><use href="#exp"/></svg></button>
<button class="btn sq" aria-label="全部折叠"><svg class="ic"><use href="#col"/></svg></button>
<button class="btn sq pressed" aria-label="显示列"><svg class="ic"><use href="#cols"/></svg></button>
<i class="vr-line ms-1"></i>
<button class="btn sq mx-1" aria-label="新建"><svg class="ic"><use href="#puzzle"/></svg></button>
<i class="vr-line ms-1"></i>
<button class="btn sq ms-1" aria-label="树过滤器"><svg class="ic"><use href="#tfil"/></svg></button>
<button class="btn sq" aria-label="树列"><svg class="ic"><use href="#tcol"/></svg></button>
<i class="vr-line ms-1"></i>
<button class="btn sq" aria-label="更多"><svg width="12" height="10"><path d="M1 2l3 3-3 3M6 2l3 3-3 3" fill="none" stroke="#333" stroke-width="1.800"/></svg></button>
<button class="btn sq more position-relative" aria-label="设置"><svg class="ic"><use href="#docl"/></svg></button>
</div>
<div class="filter-row d-flex align-items-center">
<svg class="ic"><use href="#funnel"/></svg>
<div class="filter-box position-relative"><input class="form-control" type="text" aria-label="过滤"><button class="btn clear-btn" aria-label="清除"><svg width="12" height="12"><path d="M1 1l10 10M11 1L1 11" stroke="#a5a8aa" stroke-width="1.600"/></svg></button></div>
<button class="btn filter-opt" aria-label="过滤选项"><b class="caret d-block"></b></button>
<button class="btn ms-1 ps-1" aria-label="添加"><svg width="16" height="16"><path d="M8 1v14M1 8h14" stroke="#a0a3a4" stroke-width="4"/></svg></button>
</div>
<ul class="tree list-unstyled">
<li><div class="root-row d-flex align-items-center"><svg class="ic"><use href="#bcube"/></svg>升降支架.PRT</div></li>
<li><div class="d-flex align-items-center"><button class="btn twisty" aria-label="展开"></button><svg class="ic"><use href="#design"/></svg>设计项</div></li>
<li><div class="d-flex align-items-center"><span class="twisty"></span><svg class="ic"><use href="#plane-s"/></svg>RIGHT</div></li>
<li><div class="d-flex align-items-center"><span class="twisty"></span><svg class="ic"><use href="#plane-s"/></svg>TOP</div></li>
<li><div class="d-flex align-items-center"><span class="twisty"></span><svg class="ic"><use href="#plane-s"/></svg>FRONT</div></li>
<li><div class="d-flex align-items-center"><span class="twisty"></span><svg class="ic"><use href="#csys"/></svg>PRT_CSYS_DEF</div></li>
<li><div class="d-flex align-items-center"><button class="btn twisty" aria-label="展开"></button><svg class="ic"><use href="#ext"/></svg>拉伸 1</div></li>
<li><div class="d-flex align-items-center"><button class="btn twisty" aria-label="展开"></button><svg class="ic"><use href="#ext"/></svg>拉伸 3</div></li>
<li><div class="d-flex align-items-center"><span class="twisty"></span><svg class="ic"><use href="#thick-p"/></svg>加厚 1</div></li>
<li><div class="d-flex align-items-center"><button class="btn twisty" aria-label="展开"></button><svg class="ic"><use href="#ext"/></svg>拉伸 4</div></li>
<li><div class="d-flex align-items-center"><button class="btn twisty" aria-label="展开"></button><svg class="ic"><use href="#ext"/></svg>拉伸 5</div></li>
<li><div class="d-flex align-items-center"><button class="btn twisty" aria-label="展开"></button><svg class="ic"><use href="#ext"/></svg>拉伸 8</div></li>
<li><div class="d-flex align-items-center"><button class="btn twisty" aria-label="展开"></button><svg class="ic"><use href="#ext"/></svg>拉伸 9</div></li>
<li><div class="d-flex align-items-center"><span class="twisty"></span><svg class="ic"><use href="#round"/></svg>倒圆角 1</div></li>
<li><div class="d-flex align-items-center"><button class="btn twisty" aria-label="展开"></button><svg class="ic"><use href="#ext"/></svg>拉伸 10</div></li>
<li><div class="d-flex align-items-center"><span class="twisty"></span><svg class="ic"><use href="#plane-s"/></svg>DTM1</div></li>
<li><div class="d-flex align-items-center"><button class="btn twisty" aria-label="展开"></button><svg class="ic"><use href="#ext"/></svg>拉伸 11</div></li>
<li><div class="d-flex align-items-center"><span class="twisty"></span><svg class="ic"><use href="#chamfer"/></svg>倒角 1</div></li>
<li><div class="d-flex align-items-center"><button class="btn twisty" aria-label="展开"></button><svg class="ic"><use href="#ext"/></svg>拉伸 12</div></li>
</ul>
<div class="insert-line"></div>
</aside>

<main class="flex-grow-1 position-relative overflow-hidden">
<svg class="w-100 h-100" viewBox="331 168 1069 665" role="img" aria-label="升降支架">
<defs>
<linearGradient id="ringOut"><stop offset="0" stop-color="#9dabba"/><stop offset=".2" stop-color="#9dabba"/><stop offset=".5" stop-color="#8794a2"/><stop offset=".8" stop-color="#6a737e"/><stop offset=".92" stop-color="#565e67"/><stop offset="1" stop-color="#59616a"/></linearGradient>
<linearGradient id="ringIn"><stop offset="0" stop-color="#5d656f"/><stop offset=".1" stop-color="#59606a"/><stop offset=".38" stop-color="#8a97a6"/><stop offset=".7" stop-color="#9dabba"/><stop offset="1" stop-color="#97a5b5"/></linearGradient>
<linearGradient id="slotG" x2="0" y2="1"><stop offset="0" stop-color="#8592a0"/><stop offset=".4" stop-color="#8e9caa"/><stop offset="1" stop-color="#a4b2c3"/></linearGradient>
<linearGradient id="holeG"><stop offset="0" stop-color="#737c88"/><stop offset=".5" stop-color="#98a5b4"/><stop offset="1" stop-color="#a4b1c2"/></linearGradient>
<clipPath id="clipIn"><ellipse cx="1021.500" cy="614.500" rx="74" ry="14.500"/></clipPath>
</defs>
<g stroke="#101316" stroke-width="1" stroke-linejoin="round" shape-rendering="crispEdges">
<!-- separate block -->
<path d="M576.500 466l34 12 1 125-34-11z" fill="#97a2b3"/>
<path d="M576.500 466l139-15h4l32 12-141 15z" fill="#87929f"/>
<path d="M610.500 478l141-15 .5 125.500L611 603.500z" fill="#7e8792"/>
<ellipse cx="641" cy="467.500" rx="27.500" ry="5.500" fill="#8e9aa8"/>
<path d="M617 470c4-5 44-7 48 0-6 4-40 4-48 0z" fill="url(#holeG)"/>
<ellipse cx="658" cy="537" rx="8" ry="9" fill="#a4b1c2"/><path d="M659 528v9q-1 5-6 7" fill="none"/>
<!-- arm -->
<path d="M565.500 655L794 631l34 12-228 24-6.500-2 .5 27-22.500 2.500-6-2.500z" fill="#87929f"/>
<path d="M571.500 657l59-5.500v10l-37 3.500v27.500l-22 2z" fill="#7e8792"/>
<path d="M630.500 651.500c20-2 35 0 35.500 3.500 0 2-6 3.500-12 4.500l-23.500 2z" fill="url(#holeG)"/>
<path d="M565.500 655l6 2v37.500l-6-2zM593.500 665l6.500 2v37.500l-6.500-2.500z" fill="#97a2b3"/>
<!-- ring clamp -->
<path d="M912.500 614l16.500-1.500c10-9 45-16 91-16 55 0 94 8 94.500 18.500 0 9-39 17.500-94 18l-39-1-28 2-10-3-31 3z" fill="#87929f"/>
<path d="M981 632c60 3 132-2 133.500-17v36l.5 2c-6 14-74 20-134 16z" fill="url(#ringOut)"/>
<ellipse cx="1021.500" cy="614.500" rx="74" ry="14.500" fill="url(#ringIn)"/>
<g clip-path="url(#clipIn)"><ellipse cx="992" cy="620" rx="8.500" ry="9" fill="#a4b1c2"/><path d="M992 611c-5 0-8 4-8 9 0 3 1 5 2 6 3-3 6-6 6-8z" fill="#e8e9ed"/></g>
<path d="M927.500 617l20-2.500v9z" fill="#7e8792"/><path d="M947.500 614v9l16 6c-10-3-17-8-16-15z" fill="#5d656f" stroke="none"/><path d="M927.500 617l36 12M947.500 614v9" fill="none"/>
<ellipse cx="1068.500" cy="649" rx="8.500" ry="9.500" fill="#a4b1c2"/><path d="M1068 640c-5 0-8 4-8 9 0 3 1 5 2 6 3-3 6-6 6-8z" fill="#e8e9ed"/>
<path d="M945.500 631l8.500 3v37.500l-8.500-3z" fill="#97a2b3"/><path d="M954 634l27.500-2v37.500l-27.500 2z" fill="#7e8792"/>
<!-- upright and front face -->
<path d="M793.500 505.500l34 12.500 1 125-34-12z" fill="#97a2b3"/>
<path d="M793.500 505.500l62-37 47-4.500 10 4.500-85 49.500z" fill="#9ba8b7"/>
<path d="M827.500 518l85-49.500V634l33-3v37.500L600 704.500V667l228.500-24z" fill="#7e8792"/>
<ellipse cx="853" cy="578" rx="8.500" ry="41.500" fill="url(#slotG)"/><ellipse cx="887" cy="574.500" rx="8.500" ry="42" fill="url(#slotG)"/>
<!-- upper rail -->
<path d="M731 381.500l51.500 19.500-4 6-28.500-8.500-8-6z" fill="#666e78"/><path d="M742 391.500l38 14" fill="none"/>
<path d="M850 469l22-35 12 11 40 13-4 4z" fill="#7e8792" stroke="none"/>
<path d="M872 434l52 18.500 22 18.500-26-9-25-10.500-7-2z" fill="#666e78" stroke="none"/>
<path d="M850 469l70-7M872 434l18 15 5 2M872 434l52 18.500M884 445l51 19.500" fill="none"/>
<path d="M782.500 401l89.500 33-22 35-89.500-32.500z" fill="#a5b2c3"/>
<path d="M731 381.500l68-7 192.500 71L924 452.500z" fill="#87929f"/>
<path d="M924 452.500l67.500-7V469l-30 3.500h-10l-6-1.500z" fill="#7e8792"/>
</g>
<g fill="none" stroke-width="1.500"><path d="M842.500 543.500V521" stroke="#2f2"/><path d="M843 543.500l20-2" stroke="#f22"/><path d="M843 543.500l10 4" stroke="#3ff"/></g>
<circle cx="842.500" cy="521" r="2.500" fill="#2f2"/><circle cx="863.500" cy="541.500" r="2.200" fill="#f33"/><circle cx="853.500" cy="547.500" r="3" fill="#3ff"/>
</svg>
<div class="view-tools d-flex" role="toolbar" aria-label="视图">
<button class="btn sq" aria-label="重新调整"><svg class="ic"><use href="#zfit"/></svg></button><button class="btn sq" aria-label="放大"><svg class="ic"><use href="#zin"/></svg></button><button class="btn sq" aria-label="缩小"><svg class="ic"><use href="#zout"/></svg></button><button class="btn sq" aria-label="重画"><svg class="ic"><use href="#repaint"/></svg></button><button class="btn sq more position-relative" aria-label="渲染选项"><svg class="ic"><use href="#render"/></svg></button><button class="btn sq more position-relative" aria-label="显示样式"><svg class="ic"><use href="#wcube"/></svg></button><button class="btn sq more position-relative" aria-label="已保存方向"><svg class="ic"><use href="#orient"/></svg></button><button class="btn sq" aria-label="视图管理器"><svg class="ic"><use href="#cam"/></svg></button><button class="btn sq" aria-label="视图法向"><svg class="ic"><use href="#sec"/></svg></button><button class="btn sq" aria-label="透视图"><svg class="ic"><use href="#persp"/></svg></button><button class="btn sq more position-relative" aria-label="截面"><svg class="ic"><use href="#halfc"/></svg></button><button class="btn sq more position-relative" aria-label="基准显示"><svg class="ic"><use href="#datum"/></svg></button><button class="btn sq pressed" aria-label="注释显示"><svg class="ic"><use href="#annot"/></svg></button><button class="btn sq pressed" aria-label="旋转中心"><svg class="ic"><use href="#spin"/></svg></button><button class="btn sq" disabled aria-label="仿真"><svg class="ic"><use href="#sim"/></svg></button><button class="btn sq" disabled aria-label="暂停"><svg class="ic"><use href="#pause"/></svg></button><button class="btn sq" disabled aria-label="继续"><svg class="ic"><use href="#resume"/></svg></button>
</div>
<div class="watermark d-flex align-items-center">dooooit@<i></i><i></i><i></i></div>
</main>
</div>
</body>
</html>
